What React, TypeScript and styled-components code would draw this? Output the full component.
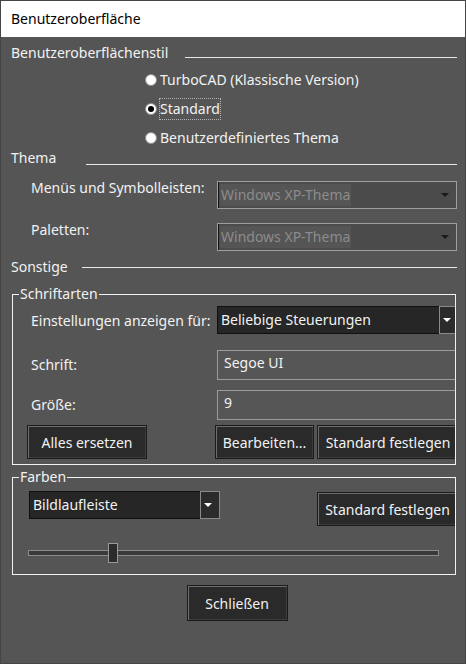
import React from "react";
import styled, { createGlobalStyle } from "styled-components";

const GlobalStyle = createGlobalStyle`
  html, body {
    margin: 0;
    padding: 0;
    background: #555555;
  }
  * {
    box-sizing: border-box;
  }
`;

const FONT = `"Noto Sans", "Open Sans", sans-serif`;

export default function App() {
  const sliderValue = 0.195;

  return (
    <>
      <GlobalStyle />
      <Window>
        <TitleBar>Benutzeroberfläche</TitleBar>
        <Body>
          <SectionHeader>
            <SectionLabel>Benutzeroberflächenstil</SectionLabel>
            <Rule $gap={17} $drop={8} />
          </SectionHeader>

          <RadioGroup>
            <RadioRow>
              <Radio />
              <RadioText>TurboCAD (Klassische Version)</RadioText>
            </RadioRow>
            <RadioRow>
              <Radio $checked />
              <RadioText $focused>Standard</RadioText>
            </RadioRow>
            <RadioRow>
              <Radio />
              <RadioText>Benutzerdefiniertes Thema</RadioText>
            </RadioRow>
          </RadioGroup>

          <SectionHeader $top={-1}>
            <SectionLabel>Thema</SectionLabel>
            <Rule $gap={30} $drop={12} />
          </SectionHeader>

          <ThemeRows>
            <ThemeRow>
              <RowLabel>Menüs und Symbolleisten:</RowLabel>
              <DisabledCombo>
                <DisabledValue>Windows XP-Thema</DisabledValue>
                <Arrow $color="#1a1a1a" />
              </DisabledCombo>
            </ThemeRow>
            <ThemeRow>
              <RowLabel>Paletten:</RowLabel>
              <DisabledCombo>
                <DisabledValue>Windows XP-Thema</DisabledValue>
                <Arrow $color="#1a1a1a" />
              </DisabledCombo>
            </ThemeRow>
          </ThemeRows>

          <SectionHeader $top={6}>
            <SectionLabel>Sonstige</SectionLabel>
            <Rule $gap={14} $drop={0} />
          </SectionHeader>

          <Group $top={7} $bottom={5}>
            <Legend>Schriftarten</Legend>
            <FontGrid>
              <FieldLabel>Einstellungen anzeigen für:</FieldLabel>
              <Combo>
                <ComboValue>Beliebige Steuerungen</ComboValue>
                <ComboButton>
                  <Arrow $color="#ffffff" />
                </ComboButton>
              </Combo>

              <FieldLabel $top={14}>Schrift:</FieldLabel>
              <TextBox $top={14}>Segoe UI</TextBox>

              <FieldLabel $top={10}>Größe:</FieldLabel>
              <TextBox $top={10}>9</TextBox>

              <ButtonCell>
                <Button $width={120}>Alles ersetzen</Button>
              </ButtonCell>
              <ButtonPair>
                <Button $width={99}>Bearbeiten...</Button>
                <Button $width={142}>Standard festlegen</Button>
              </ButtonPair>
            </FontGrid>
          </Group>

          <Group $top={2} $bottom={11}>
            <Legend>Farben</Legend>
            <ColorRow>
              <Combo $width={191}>
                <ComboValue>Bildlaufleiste</ComboValue>
                <ComboButton>
                  <Arrow $color="#ffffff" />
                </ComboButton>
              </Combo>
              <SideButton $width={141}>Standard festlegen</SideButton>
            </ColorRow>
            <Slider>
              <Track />
              <Thumb style={{ left: `${sliderValue * 100}%` }} />
            </Slider>
          </Group>

          <Footer>
            <Button $width={101} $height={36}>
              Schließen
            </Button>
          </Footer>
        </Body>
      </Window>
    </>
  );
}

const Window = styled.div`
  width: 466px;
  height: 664px;
  border: 1px solid #454545;
  background: #555555;
  display: flex;
  flex-direction: column;
  font-family: ${FONT};
  font-size: 14px;
  color: #f2f2f2;
  overflow: hidden;
`;

const TitleBar = styled.div`
  height: 36px;
  line-height: 36px;
  padding-left: 10px;
  background: #ffffff;
  color: #000000;
  font-size: 14px;
`;

const Body = styled.div`
  flex: 1;
  display: flex;
  flex-direction: column;
  padding: 0 8px 0 10px;
`;

const SectionHeader = styled.div<{ $top?: number }>`
  display: flex;
  align-items: center;
  height: 20px;
  margin-top: ${(p) => p.$top ?? 6}px;
`;

const SectionLabel = styled.span`
  white-space: nowrap;
  line-height: 20px;
`;

const Rule = styled.div<{ $gap: number; $drop: number }>`
  flex: 1;
  height: 0;
  margin-left: ${(p) => p.$gap}px;
  margin-top: ${(p) => p.$drop}px;
  border-top: 1px solid #e6e6e6;
`;

const RadioGroup = styled.div`
  display: flex;
  flex-direction: column;
  gap: 7px;
  margin-top: 6px;
  padding-left: 134px;
`;

const RadioRow = styled.div`
  display: flex;
  align-items: center;
  height: 22px;
`;

const Radio = styled.span<{ $checked?: boolean }>`
  position: relative;
  width: 12px;
  height: 12px;
  border-radius: 50%;
  background: #ffffff;
  border: 1px solid #8e8e8e;
  flex: none;

  &::after {
    content: "";
    display: ${(p) => (p.$checked ? "block" : "none")};
    position: absolute;
    left: 2px;
    top: 2px;
    width: 6px;
    height: 6px;
    border-radius: 50%;
    background: #000000;
  }
`;

const RadioText = styled.span<{ $focused?: boolean }>`
  margin-left: 2px;
  padding: 0;
  line-height: 20px;
  border: 1px dotted ${(p) => (p.$focused ? "#b4b4b4" : "transparent")};
`;

const ThemeRows = styled.div`
  display: flex;
  flex-direction: column;
  gap: 14px;
  margin-top: 13px;
  padding-left: 20px;
`;

const ThemeRow = styled.div`
  display: grid;
  grid-template-columns: 186px 1fr;
  align-items: start;
`;

const RowLabel = styled.span`
  line-height: 20px;
  margin-top: -3px;
`;

const DisabledCombo = styled.div`
  position: relative;
  height: 28px;
  display: flex;
  align-items: center;
  padding-left: 2px;
  background: #4b4b4b;
  border: 1px solid #9e9e9e;
  box-shadow: inset 1px 0 0 #141414;
`;

const DisabledValue = styled.span`
  background: #555555;
  color: #8c8c8c;
  line-height: 22px;
  padding: 0 1px;
`;

const Arrow = styled.span<{ $color: string }>`
  position: absolute;
  right: 7px;
  top: 50%;
  margin-top: -2px;
  width: 0;
  height: 0;
  border-left: 4px solid transparent;
  border-right: 4px solid transparent;
  border-top: 4px solid ${(p) => p.$color};
`;

const Group = styled.fieldset<{ $top: number; $bottom: number }>`
  margin: ${(p) => p.$top}px 1px 0 1px;
  padding: 2px 0 ${(p) => p.$bottom}px 14px;
  border: 1px solid #f2f2f2;
  min-width: 0;
  overflow: hidden;
`;

const Legend = styled.legend`
  margin-left: -8px;
  padding: 0 1px;
  line-height: 20px;
`;

const FontGrid = styled.div`
  display: grid;
  grid-template-columns: 190px 1fr;
  align-items: start;
`;

const FieldLabel = styled.span<{ $top?: number }>`
  padding-left: 4px;
  margin-top: ${(p) => p.$top ?? 0}px;
  line-height: 30px;
`;

const Combo = styled.div<{ $width?: number }>`
  position: relative;
  height: 28px;
  width: ${(p) => (p.$width ? `${p.$width}px` : "auto")};
  display: flex;
  align-items: center;
  background: #262626;
  border: 1px solid #0f0f0f;
`;

const ComboValue = styled.span`
  padding-left: 3px;
  line-height: 20px;
`;

const ComboButton = styled.span`
  position: absolute;
  right: -1px;
  top: -1px;
  bottom: -1px;
  width: 20px;
  background: #2b2b2b;
  border: 1px solid #8a8a8a;
`;

const TextBox = styled.div<{ $top: number }>`
  margin-top: ${(p) => p.$top}px;
  width: calc(100% + 20px);
  height: 30px;
  padding: 2px 0 0 6px;
  background: #565656;
  border: 1px solid #9c9c9c;
  line-height: 20px;
`;

const ButtonCell = styled.div`
  margin-top: 5px;
`;

const ButtonPair = styled.div`
  margin-top: 5px;
  margin-left: -2px;
  display: flex;
  gap: 3px;
`;

const Button = styled.button<{ $width: number; $height?: number }>`
  flex: none;
  width: ${(p) => p.$width}px;
  height: ${(p) => p.$height ?? 34}px;
  padding: 0;
  background: #2a2a2a;
  color: #f2f2f2;
  font-family: ${FONT};
  font-size: 14px;
  border: 1px solid #1b1b1b;
  box-shadow: inset 1px 1px 0 #6c6c6c, inset -1px -1px 0 #3c3c3c;
  white-space: nowrap;
`;

const SideButton = styled(Button)`
  margin: 1px -3px 0 auto;
`;

const ColorRow = styled.div`
  display: flex;
  align-items: flex-start;
  padding-left: 2px;
  margin-top: 2px;
`;

const Slider = styled.div`
  position: relative;
  width: 411px;
  height: 20px;
  margin: 17px 0 0 1px;
  display: flex;
  align-items: center;
`;

const Track = styled.div`
  width: 100%;
  height: 6px;
  background: #3a3a3a;
  border: 1px solid #8c8c8c;
`;

const Thumb = styled.div`
  position: absolute;
  top: 0;
  width: 10px;
  height: 20px;
  background: #2b2b2b;
  border: 1px solid #9a9a9a;
`;

const Footer = styled.div`
  display: flex;
  justify-content: center;
  margin-top: 10px;
  padding-left: 6px;
`;
